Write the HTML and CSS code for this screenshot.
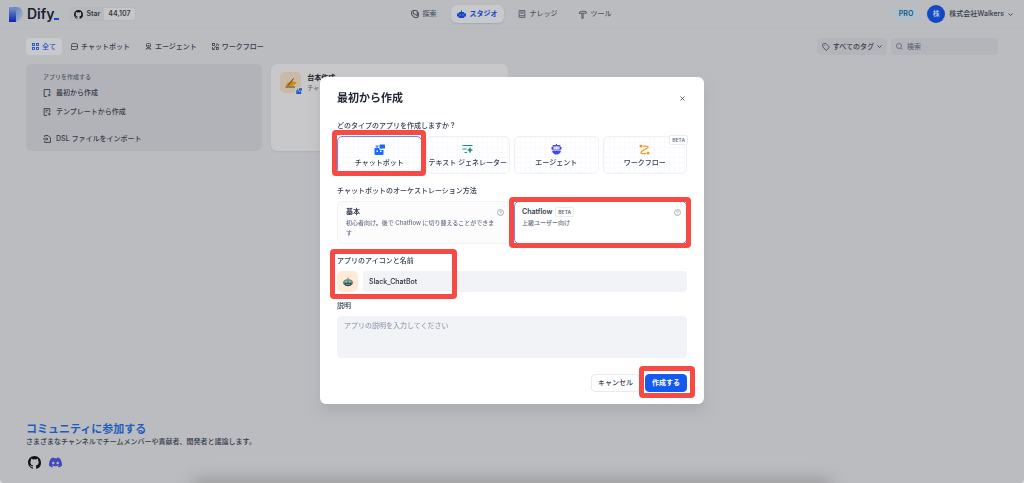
FILE: index.html
```html
<!DOCTYPE html>
<html lang="ja">
<head>
<meta charset="utf-8">
<title>Dify スタジオ</title>
<link rel="stylesheet" href="styles.css">
</head>
<body>
<svg class="defs" width="0" height="0" aria-hidden="true">
  <symbol id="github" viewBox="0 0 16 16"><path fill="currentColor" d="M8 0C3.58 0 0 3.58 0 8c0 3.54 2.29 6.53 5.47 7.59.4.07.55-.17.55-.38v-1.33c-2.01.37-2.53-.49-2.69-.94-.09-.23-.48-.94-.82-1.13-.28-.15-.68-.52-.01-.53.63-.01 1.08.58 1.23.82.72 1.21 1.87.87 2.33.66.07-.52.28-.87.51-1.07-1.78-.2-3.64-.89-3.64-3.95 0-.87.31-1.59.82-2.15-.08-.2-.36-1.02.08-2.12 0 0 .67-.21 2.2.82a7.6 7.6 0 0 1 4 0c1.53-1.04 2.2-.82 2.2-.82.44 1.1.16 1.92.08 2.12.51.56.82 1.27.82 2.15 0 3.07-1.87 3.75-3.65 3.95.29.25.54.73.54 1.48v2.19c0 .21.15.46.55.38A8 8 0 0 0 16 8c0-4.42-3.58-8-8-8z"/></symbol>
  <symbol id="chevron" viewBox="0 0 10 10"><path fill="none" stroke="currentColor" stroke-width="1.8" d="M1 3l4 4 4-4"/></symbol>
  <symbol id="help" viewBox="0 0 14 14"><g fill="none" stroke="currentColor" stroke-width="1.2"><circle cx="7" cy="7" r="6"/><path d="M5.2 5.5c0-2.3 3.6-2.3 3.6 0 0 1.3-1.8 1.3-1.8 2.7M7 9.4v1.3"/></g></symbol>
  <symbol id="chatbot" viewBox="0 0 22 22"><path fill="currentColor" d="M12 1h9q1 0 1 1v6q0 1-1 1h-5l-3 2V9h-1q-1 0-1-1V2q0-1 1-1zM3 3h6v2H7v3H5V5H3z"/><path fill="currentColor" fill-rule="evenodd" d="M2 8h8q0 3 2 4h7v8q0 2-2 2H3q-2 0-2-2V9zM5 13v3h3v-3zm7 0v3h3v-3z"/></symbol>
</svg>

<header class="topbar">
  <div class="brand">
    <a class="logo" href="#" aria-label="Dify">
      <svg width="14" height="15" viewBox="0 0 14 15"><defs><linearGradient id="lg1" x1="0" y1="0" x2="0" y2="1"><stop offset="0" stop-color="#7d96c4"/><stop offset="1" stop-color="#0925b5"/></linearGradient><linearGradient id="lg2" x1="0" y1="0" x2="1" y2="1"><stop offset="0" stop-color="#4c75bd"/><stop offset="1" stop-color="#b3bac6"/></linearGradient></defs><path fill="url(#lg2)" d="M0 0h7q7 0 7 7.500Q13 13 7 15V6H0z"/><path fill="url(#lg1)" d="M0 0h4q3 2 3 6v9H0z"/></svg>
      <span class="logo-text">Dify</span><i class="cursor"></i>
    </a>
    <a class="stars" href="#">
      <span class="star-label"><svg width="9" height="9"><use href="#github"/></svg>Star</span>
      <span class="star-count">44,107</span>
    </a>
  </div>
  <nav class="mainnav">
    <a href="#"><svg width="8" height="8" viewBox="0 0 14 14"><path fill="none" stroke="currentColor" stroke-width="1.8" d="M4 1h5q2 0 2 2v7L4 6zM4 1Q1 2 1 4v4l5 5h5q2-1 2-3V5l-2-2"/></svg>探索</a>
    <a href="#" class="current"><svg width="9" height="9" viewBox="0 0 18 18"><path fill="currentColor" fill-rule="evenodd" d="M8 1h2v3h3q2 0 2 3h3v6h-3q0 3-2 3H5q-2 0-2-3H0V7h3q0-3 2-3h3zM5 9v2h2V9zm6 0v2h2V9z"/></svg>スタジオ</a>
    <a href="#"><svg width="8" height="8" viewBox="0 0 14 14"><g fill="none" stroke="currentColor" stroke-width="1.500"><path d="M2 1h10v12H3q-1 0-1-2zM2 11q0-1 1-1h9M5 2v4l2-1 2 1V2"/></g></svg>ナレッジ</a>
    <a href="#"><svg width="9" height="9" viewBox="0 0 14 14"><g fill="none" stroke="currentColor" stroke-width="1.400"><path d="M2 5q0-3 4-3h5l2 1v2h-2L9 5H5q-2-1-3 1zM6 5v8h2V5"/></g></svg>ツール</a>
  </nav>
  <div class="account">
    <span class="plan">PRO</span>
    <button class="workspace" type="button"><span class="avatar">株</span>株式会社Walkers<svg width="5" height="5"><use href="#chevron"/></svg></button>
  </div>
</header>

<main class="content">
  <div class="toolbar">
    <nav class="tabs">
      <a href="#" class="current"><svg width="7" height="7" viewBox="0 0 14 14"><g fill="none" stroke="currentColor" stroke-width="1.8"><rect x="1" y="1" width="4" height="4"/><rect x="9" y="1" width="4" height="4"/><rect x="1" y="9" width="4" height="4"/><rect x="9" y="9" width="4" height="4"/></g></svg>全て</a>
      <a href="#"><svg width="7" height="7" viewBox="0 0 14 14"><g fill="none" stroke="currentColor" stroke-width="1.5"><path d="M4 1h6q3 0 3 3v6q0 3-3 3H1V4q0-3 3-3zM1 7h12"/></g></svg>チャットボット</a>
      <a href="#"><svg width="7" height="7" viewBox="0 0 14 14"><g fill="none" stroke="currentColor" stroke-width="1.6"><rect x="3" y="1" width="8" height="7" rx="2"/><path d="M2 13q1-4 5-4t5 4M5 5h4M4 13l3-3 3 3"/></g></svg>エージェント</a>
      <a href="#"><svg width="7" height="7" viewBox="0 0 14 14"><g fill="none" stroke="currentColor" stroke-width="1.6"><rect x="1" y="1" width="4" height="4"/><rect x="9" y="9" width="4" height="4"/><path d="M8 2h3q2 0 2 2v2M1 8v5h5M2 13l8-9"/></g></svg>ワークフロー</a>
    </nav>
    <div class="filters">
      <button class="tagfilter" type="button"><svg width="8" height="8" viewBox="0 0 14 14"><g fill="none" stroke="currentColor" stroke-width="1.3"><path d="M1 3q0-2 2-2h4l6 6-5 6-6-5zM4 4h1"/></g></svg><span>すべてのタグ</span><svg width="5" height="5"><use href="#chevron"/></svg></button>
      <label class="search"><svg width="7" height="7" viewBox="0 0 14 14"><g fill="none" stroke="currentColor" stroke-width="1.5"><circle cx="6" cy="6" r="5"/><path d="M10 10l3 3"/></g></svg><input type="search" placeholder="検索" aria-label="検索"></label>
    </div>
  </div>
  <div class="apps">
    <section class="create">
      <h2>アプリを作成する</h2>
      <a href="#"><svg width="8" height="8" viewBox="0 0 14 14"><g fill="none" stroke="currentColor" stroke-width="1.600"><path d="M7 13H2V1h10v6M11 8v5M8.500 10.500h5"/></g></svg>最初から作成</a>
      <a href="#"><svg width="8" height="8" viewBox="0 0 14 14"><g fill="none" stroke="currentColor" stroke-width="1.600"><path d="M7 13H2V1h10v6M4.500 4h5M4.500 7h3M11 8v5M8.500 10.500h5"/></g></svg>テンプレートから作成</a>
      <a href="#" class="import"><svg width="8" height="8" viewBox="0 0 14 14"><g fill="none" stroke="currentColor" stroke-width="1.600"><path d="M3 4V1h6l4 4v8H3v-3M0 7h8M6 4.500L8.500 7 6 9.500"/></g></svg>DSL ファイルをインポート</a>
    </section>
    <article class="app">
      <div class="appicon">
        <svg width="12" height="11" viewBox="0 0 24 22"><path fill="#c78d16" d="M2 16q3-6 8-6l3-3 4 2 5 1q2 1 0 3l-4 3q-8 4-16 2z"/><path fill="none" stroke="#5c3c12" stroke-width="2" d="M1 20h19M6 17L17 3"/></svg>
        <span class="appbadge"><svg width="6" height="6"><use href="#chatbot"/></svg></span>
      </div>
      <div><h3>台本作成</h3><p>チャットボット</p></div>
    </article>
  </div>
</main>

<footer class="community">
  <h2>コミュニティに参加する</h2>
  <p>さまざまなチャンネルでチームメンバーや貢献者、開発者と議論します。</p>
  <div class="social">
    <a href="#" aria-label="GitHub"><svg width="13" height="13"><use href="#github"/></svg></a>
    <a href="#" aria-label="Discord" class="discord"><svg width="13" height="13" viewBox="0 0 24 24"><path fill="currentColor" fill-rule="evenodd" d="M20.300 4.400A20 20 0 0 0 15.400 2.900l-.7 1.400a18 18 0 0 0-5.400 0l-.7-1.400a20 20 0 0 0-4.900 1.500C.6 9-.3 13.600.1 18.100a20 20 0 0 0 6 3l1.300-2.100-1.900-.9.500-.4a14 14 0 0 0 12 0l.5.4-1.900.9 1.300 2.100a20 20 0 0 0 6-3c.5-5.200-.9-9.700-3.600-13.700zM8 15.400c-1.200 0-2.200-1.100-2.200-2.500s1-2.400 2.200-2.400 2.200 1.100 2.200 2.400-1 2.500-2.200 2.500zm8 0c-1.200 0-2.200-1.100-2.200-2.500s1-2.400 2.200-2.400 2.200 1.100 2.200 2.400-1 2.500-2.200 2.500z"/></svg></a>
  </div>
</footer>
<div class="dock"></div>

<div class="overlay">
  <form class="modal" role="dialog" aria-labelledby="title">
    <div class="modal-head"><h1 id="title">最初から作成</h1><button class="close" type="button" aria-label="閉じる"><svg width="5" height="5" viewBox="0 0 10 10"><path stroke="currentColor" stroke-width="1.8" d="M1 1l8 8M9 1L1 9"/></svg></button></div>

    <section class="field">
      <h2>どのタイプのアプリを作成しますか？</h2>
      <div class="types">
        <button type="button" class="type selected marked"><svg class="blue" width="11" height="11"><use href="#chatbot"/></svg>チャットボット<i class="mark"></i></button>
        <button type="button" class="type"><svg class="teal" width="11" height="11" viewBox="0 0 22 22"><path stroke="currentColor" stroke-width="2.200" d="M1 3h20M1 10h8M5 17h5"/><path fill="currentColor" d="M16 6l2 4 4 2-4 2-2 5-2-5-4-2 4-2z"/></svg>テキスト ジェネレーター</button>
        <button type="button" class="type"><svg class="indigo" width="11" height="11" viewBox="0 0 22 22"><path fill="currentColor" fill-rule="evenodd" d="M10 0h2v2h5q2 0 2 2v2h2v5h-2v2H3v-2H1V6h2V4q0-2 2-2h5zM5 5v6h12V5zM7 7h2v2H7zm6 0h2v2h-2zM2 14h18q-1 5-6 7H8q-5-2-6-7z"/></svg>エージェント</button>
        <button type="button" class="type"><svg class="orange" width="11" height="11" viewBox="0 0 22 22"><path fill="none" stroke="currentColor" stroke-width="2.500" d="M8 4h7q5 1 2 4L6 14q-4 4 0 5h8"/><circle cx="4" cy="4" r="3" fill="currentColor"/><circle cx="18" cy="18" r="3" fill="currentColor"/></svg>ワークフロー<span class="beta corner">BETA</span></button>
      </div>
    </section>

    <section class="field">
      <h2>チャットボットのオーケストレーション方法</h2>
      <div class="modes">
        <button type="button" class="mode basic"><span class="mode-title">基本<svg width="7" height="7"><use href="#help"/></svg></span><span class="mode-desc">初心者向け。後で Chatflow に切り替えることができます</span></button>
        <button type="button" class="mode selected marked"><span class="mode-title">Chatflow<span class="beta">BETA</span><svg width="7" height="7"><use href="#help"/></svg></span><span class="mode-desc">上級ユーザー向け</span><i class="mark"></i></button>
      </div>
    </section>

    <section class="field">
      <div class="name-area">
        <label for="name">アプリのアイコンと名前</label>
        <i class="mark"></i>
      </div>
      <div class="name-row">
        <button type="button" class="boticon" aria-label="アイコン"><svg width="10" height="10" viewBox="0 0 20 20"><path fill="#e35545" d="M9 1h2v4H9z"/><path fill="#569aa0" d="M3 6q7-4 14 0l3 3v4l-3 3q-7 4-14 0l-3-3V9z"/><path fill="#344f61" d="M3 11h14v5q-7 5-14 0z"/><path fill="#efb64b" d="M5 8h3v3H5zm7 0h3v3h-3zM6 15h8v1H6z"/></svg></button>
        <input id="name" type="text" value="Slack_ChatBot">
      </div>
    </section>

    <section class="field">
      <label for="desc">説明</label>
      <textarea id="desc" placeholder="アプリの説明を入力してください"></textarea>
    </section>

    <div class="actions">
      <button type="button" class="btn">キャンセル</button>
      <button type="submit" class="btn primary marked">作成する<i class="mark"></i></button>
    </div>
  </form>
</div>
</body>
</html>
```
FILE: styles.css
```css
* { box-sizing: border-box; }
html { background: #e4e5e7; }
body {
  margin: 0;
  min-height: 100vh;
  display: flex;
  flex-direction: column;
  background: #bbbcc0;
  border-radius: 0 0 4px 4px;
  color: #343b49;
  font: 500 7px/12px Inter, "Noto Sans CJK JP", sans-serif;
  overflow: hidden;
}
h1, h2, h3, p { margin: 0; font: inherit; }
a { color: inherit; text-decoration: none; }
button, input, textarea {
  margin: 0;
  padding: 0;
  border: 0;
  background: none;
  color: inherit;
  font: inherit;
  outline: 0;
}
svg { display: block; flex: none; }
.defs { position: absolute; }

/* Top bar */
.topbar {
  display: grid;
  grid-template-columns: 1fr auto 1fr;
  align-items: center;
  height: 29px;
  padding: 0 11px 0 9px;
  border-bottom: 1px solid #b7b8bc;
}
.brand, .logo, .stars, .star-label, .mainnav, .mainnav a, .account, .workspace { display: flex; align-items: center; }
.brand { gap: 10px; }
.logo-text { margin-left: 4px; color: #1c2130; font-size: 14px; font-weight: 600; line-height: 16px; }
.cursor { width: 5px; height: 2px; margin-top: 9px; background: #1b4ad0; }
.stars { height: 14px; border: 1px solid #b6b7bc; border-radius: 3px; background: #b8b9bd; font-weight: 600; overflow: hidden; }
.star-label { gap: 3px; padding: 0 4px; }
.star-label svg { color: #15181f; }
.star-count { padding: 0 4px; background: #c6c6c8; }
.mainnav { gap: 8px; color: #4d5462; }
.mainnav a { gap: 4px; height: 18px; padding: 0 6px; border-radius: 6px; }
.mainnav .current { background: #c8c9cc; color: #1544c4; font-weight: 700; box-shadow: 0 1px 2px #a5a6ac; }
.account { justify-content: flex-end; gap: 8px; }
.plan { padding: 0 6px; border-radius: 3px; background: #b0c0ca; color: #075a88; font-weight: 600; }
.workspace { gap: 4px; }
.avatar { width: 18px; height: 18px; border-radius: 50%; background: #1148c4; color: #c6cfe6; line-height: 18px; text-align: center; }

/* App list */
.content { flex: 1; padding: 9px 26px; }
.toolbar, .tabs, .tabs a, .filters, .tagfilter, .search { display: flex; align-items: center; }
.toolbar { justify-content: space-between; margin-bottom: 9px; }
.tabs { gap: 3px; }
.tabs a { gap: 3px; height: 17px; padding: 0 6px; border-radius: 4px; }
.tabs .current { background: #c8c9cb; color: #244fca; }
.filters { gap: 4px; }
.tagfilter, .search { height: 17px; padding: 0 5px; gap: 3px; border-radius: 4px; background: #b4b5ba; }
.search { width: 107px; gap: 4px; color: #535a68; }
.search input { min-width: 0; flex: 1; }
.search input::placeholder { color: #5e6573; opacity: 1; }
.apps { display: grid; grid-template-columns: repeat(4, 1fr); gap: 9px; }
.create, .app { min-height: 87px; border-radius: 6px; }
.create { background: #b2b3b8; padding-top: 8px; }
.create h2 { margin-bottom: 1px; padding-left: 17px; font-size: 6px; line-height: 10px; color: #50586a; }
.create a { display: flex; align-items: center; gap: 5px; height: 19px; padding-left: 17px; }
.create .import { height: 26px; margin-top: 4px; border-top: 1px solid #b0b1b6; }
.app { display: flex; gap: 6px; padding: 8px 9px; background: #c8c8ca; box-shadow: 0 1px 2px #aeafb3; }
.app h3 { color: #1d2330; font-weight: 700; }
.app p { font-size: 6px; line-height: 8px; color: #606776; }
.appicon { position: relative; display: grid; place-items: center; width: 21px; height: 21px; border-radius: 5px; background: #c9b9a7; }
.appbadge { position: absolute; right: -2px; bottom: -2px; padding: 1px; border-radius: 2px; background: #c8c8ca; color: #1756c4; }

/* Community footer */
.community { padding: 0 26px 14px; }
.community h2 { color: #1b5ebd; font-size: 11px; font-weight: 700; line-height: 14px; }
.community p { margin-bottom: 8px; }
.social { display: flex; gap: 8px; padding-left: 2px; color: #101216; }
.discord { color: #4149bd; }
.dock { position: fixed; left: 19%; right: 19%; bottom: -12px; height: 12px; border-radius: 8px; box-shadow: 0 0 16px 4px #98989a; }

/* Dialog */
.overlay { position: fixed; inset: 0; display: grid; place-items: center; padding-bottom: 2px; }
.modal {
  width: 384px;
  padding: 14px 17px 12px;
  border-radius: 6px;
  background: #fff;
  color: #354052;
  box-shadow: 0 8px 12px #9fa0a588;
}
.modal-head { display: flex; justify-content: space-between; align-items: center; margin-bottom: 15px; }
.modal h1 { color: #1d2433; font-size: 11px; font-weight: 700; line-height: 14px; }
.close { padding: 2px; color: #535b6c; }
.field { display: flex; flex-direction: column; gap: 4px; margin-bottom: 11px; }
.field:nth-of-type(3) { margin-bottom: 8px; }
.types { display: grid; grid-template-columns: repeat(4, 1fr); gap: 4px; }
.modes { display: grid; grid-template-columns: 1fr 1fr; gap: 4px; }
.type {
  position: relative;
  display: flex;
  flex-direction: column;
  align-items: center;
  gap: 2px;
  height: 38px;
  padding-top: 7px;
  border: 1px solid #f0f1f5;
  border-radius: 5px;
  background-color: #fff;
  background-image: linear-gradient(#f9fafd 1px, transparent 1px), linear-gradient(90deg, #f9fafd 1px, transparent 1px);
  background-size: 5px 5px;
  white-space: nowrap;
}
.type.selected, .mode.selected { border-color: #638df5; }
.marked { position: relative; }
.mark { position: absolute; z-index: 1; border: 5px solid #f74a45; border-radius: 4px; pointer-events: none; }
.type .mark { inset: -7px -5px -3px -6px; }
.mode .mark { inset: -5px -5px -5px -6px; }
.name-area .mark { inset: -6px auto -32px -7px; width: 127px; }
.btn .mark { inset: -9px -9px -7px -7px; }
.blue { color: #176df5; }
.teal { color: #129680; }
.indigo { color: #444ce7; }
.orange { color: #fb9322; }
.beta { padding: 0 2px; border: 1px solid #e9ebf0; border-radius: 2px; background: #fff; color: #606a7d; font-size: 5px; line-height: 8px; }
.corner { position: absolute; top: -2px; right: -2px; }
.mode { display: flex; flex-direction: column; min-height: 43px; padding: 4px 5px 4px 8px; border: 1px solid #f1f2f5; border-radius: 5px; background: #fcfcfd; text-align: left; }
.mode.selected { background: #fff; padding-left: 7px; }
.mode-title { display: flex; align-items: center; gap: 3px; align-self: stretch; font-weight: 600; }
.mode-title svg { margin-left: auto; color: #7e8798; }
.mode-desc { padding-right: 5px; color: #667085; font-size: 6px; line-height: 10px; }
.name-area { position: relative; }
.name-area label { display: block; }
.name-row { display: flex; gap: 5px; }
.boticon { display: grid; place-items: center; width: 21px; height: 21px; border-radius: 5px; background: #ffead5; }
.name-row input { flex: 1; min-width: 0; padding: 0 6px; border-radius: 4px; background: #f2f3f7; color: #1f2735; }
textarea { display: block; height: 42px; padding: 4px 7px; border-radius: 4px; background: #f2f3f7; resize: none; }
textarea::placeholder { color: #98a2b3; opacity: 1; }
.actions { display: flex; justify-content: flex-end; gap: 5px; margin-top: 16px; }
.field:nth-of-type(4) { margin-bottom: 0; }
.btn { height: 18px; padding: 0 6px; border: 1px solid #e8eaef; border-radius: 4px; background: #fff; }
.btn.primary { border-color: #155aef; background: #155aef; color: #fff; font-weight: 600; }
```
